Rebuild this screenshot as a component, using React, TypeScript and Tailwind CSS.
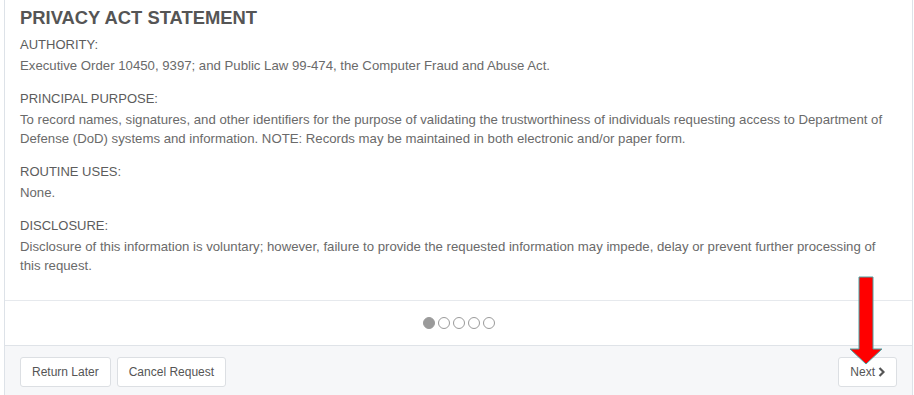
const sections = [
  {
    heading: "AUTHORITY:",
    body: "Executive Order 10450, 9397; and Public Law 99-474, the Computer Fraud and Abuse Act.",
  },
  {
    heading: "PRINCIPAL PURPOSE:",
    body: "To record names, signatures, and other identifiers for the purpose of validating the trustworthiness of individuals requesting access to Department of Defense (DoD) systems and information. NOTE: Records may be maintained in both electronic and/or paper form.",
  },
  {
    heading: "ROUTINE USES:",
    body: "None.",
  },
  {
    heading: "DISCLOSURE:",
    body: "Disclosure of this information is voluntary; however, failure to provide the requested information may impede, delay or prevent further processing of this request.",
  },
];

const ChevronRight = () => (
  <svg width="7" height="10" viewBox="0 0 7 10" className="ml-[3px]">
    <path d="M1.5 1 L5.5 5 L1.5 9" fill="none" stroke="#555" strokeWidth="2.2" />
  </svg>
);

const RedArrow = () => (
  <svg
    width="36"
    height="92"
    viewBox="0 0 36 92"
    className="absolute left-[848px] top-[275px] pointer-events-none"
  >
    <polygon
      points="11,2 25,2 25,74 34,74 18,89 2,74 11,74"
      fill="#ff0000"
      stroke="#4aa3a3"
      strokeWidth="1"
    />
  </svg>
);

const Button = ({ children }: { children: React.ReactNode }) => (
  <button className="h-[30px] px-[11px] flex items-center bg-white border border-[#dcdfe3] rounded-[3px] text-[12px] text-[#555] cursor-pointer">
    {children}
  </button>
);

const App = () => {
  return (
    <div
      className="relative w-[914px] h-[395px] overflow-hidden bg-white"
      style={{ fontFamily: '"Liberation Sans", Arial, sans-serif' }}
    >
      <div className="ml-[4px] w-[909px] h-full border-x border-[#dde2e8] flex flex-col">
        <div className="px-[15px] pt-[6px] pb-[25px]">
          <h1 className="text-[18.4px] leading-[24px] font-bold text-[#555]">
            PRIVACY ACT STATEMENT
          </h1>
          {sections.map((s, i) => (
            <div key={s.heading} className={i === 0 ? "mt-[5px]" : "mt-[14px]"}>
              <h5 className="text-[13px] leading-[20px] text-[#5c5c5c]">{s.heading}</h5>
              <p className="mt-[1px] text-[13.2px] leading-[19px] text-[#6a6a6a]">{s.body}</p>
            </div>
          ))}
        </div>

        <div className="h-[45px] border-t border-[#e6e9ed] flex items-center justify-center gap-[3px]">
          {[0, 1, 2, 3, 4].map((d) => (
            <span
              key={d}
              className={
                d === 0
                  ? "w-[12px] h-[12px] rounded-full bg-[#9a9a9a] border-[1.5px] border-[#9a9a9a]"
                  : "w-[12px] h-[12px] rounded-full bg-white border-[1.5px] border-[#9a9a9a]"
              }
            />
          ))}
        </div>

        <div className="flex-1 bg-[#f6f7f9] border-t border-[#dfe3e8] px-[15px] pt-[11px] flex items-start justify-between">
          <div className="flex gap-[6px]">
            <Button>Return Later</Button>
            <Button>Cancel Request</Button>
          </div>
          <Button>
            Next
            <ChevronRight />
          </Button>
        </div>
      </div>
      <RedArrow />
    </div>
  );
};

export default App;
